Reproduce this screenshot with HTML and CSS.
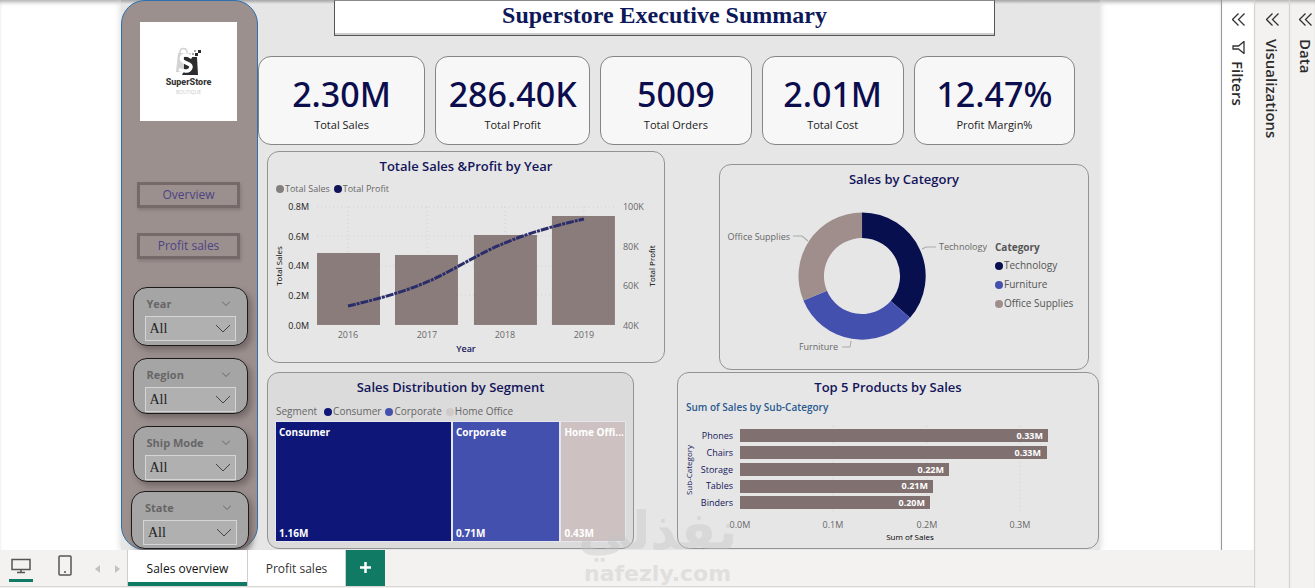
FILE: index.html
```html
<!DOCTYPE html>
<html lang="en">
<head>
<meta charset="utf-8">
<title>Superstore Executive Summary</title>
<link rel="stylesheet" href="styles.css">
</head>
<body>
<div class="app">
  <div class="workspace">
    <div class="stage">
      <div class="canvas">
        <div class="report">
          <aside class="sidebar">
            <div class="logo">
              <svg width="30" height="30" viewBox="0 0 30 30" aria-hidden="true">
                <path d="M4 6H17L15 25H2Z" fill="#d3d3d3"/>
                <path d="M6 8V5Q6 1.500 9.500 1.500T13 5V8" fill="none" stroke="#d3d3d3" stroke-width="1.500"/>
                <path d="M10 10H23L24 28H8L10 24Z" fill="#2c2c2e"/>
                <path d="M18 10.500Q9 5 7.500 11C6.500 17 18 15 17 20.500Q15 26.500 5 22.500" fill="none" stroke="#fff" stroke-width="3.500"/>
                <path d="M21 6h3v3h-3zM24 3h3v3h-3z" fill="#2c2c2e"/>
                <path d="M20 3h2v2h-2zM18 6h2v2h-2z" fill="#aaa"/>
              </svg>
              <span class="logo-name">SuperStore</span>
              <span class="logo-tag">BOUTIQUE</span>
            </div>
            <button class="nav nav-first" type="button">Overview</button>
            <button class="nav" type="button">Profit sales</button>
            <div class="slicers">
              <div class="slicer slicer-tall">
                <div class="slicer-head"><label for="year">Year</label><svg width="8" height="5" viewBox="0 0 8 5"><path d="M0 0.500L4 4.500L8 0.500"/></svg></div>
                <div class="pick"><select id="year"><option>All</option></select><svg width="14" height="9" viewBox="0 0 14 9"><path d="M0 1L7 8L14 1"/></svg></div>
              </div>
              <div class="slicer">
                <div class="slicer-head"><label for="region">Region</label><svg width="8" height="5" viewBox="0 0 8 5"><path d="M0 0.500L4 4.500L8 0.500"/></svg></div>
                <div class="pick"><select id="region"><option>All</option></select><svg width="14" height="9" viewBox="0 0 14 9"><path d="M0 1L7 8L14 1"/></svg></div>
              </div>
              <div class="slicer">
                <div class="slicer-head"><label for="ship">Ship Mode</label><svg width="8" height="5" viewBox="0 0 8 5"><path d="M0 0.500L4 4.500L8 0.500"/></svg></div>
                <div class="pick"><select id="ship"><option>All</option></select><svg width="14" height="9" viewBox="0 0 14 9"><path d="M0 1L7 8L14 1"/></svg></div>
              </div>
              <div class="slicer slicer-wide">
                <div class="slicer-head"><label for="state">State</label><svg width="8" height="5" viewBox="0 0 8 5"><path d="M0 0.500L4 4.500L8 0.500"/></svg></div>
                <div class="pick"><select id="state"><option>All</option></select><svg width="14" height="9" viewBox="0 0 14 9"><path d="M0 1L7 8L14 1"/></svg></div>
              </div>
            </div>
          </aside>

          <main class="board">
            <h1 class="title">Superstore Executive Summary</h1>
            <section class="kpis">
              <div class="kpi kpi-sales"><span class="kpi-value">2.30M</span><span class="kpi-label">Total Sales</span></div>
              <div class="kpi kpi-profit"><span class="kpi-value">286.40K</span><span class="kpi-label">Total Profit</span></div>
              <div class="kpi kpi-orders"><span class="kpi-value">5009</span><span class="kpi-label">Total Orders</span></div>
              <div class="kpi kpi-cost"><span class="kpi-value">2.01M</span><span class="kpi-label">Total Cost</span></div>
              <div class="kpi kpi-margin"><span class="kpi-value">12.47%</span><span class="kpi-label">Profit Margin%</span></div>
            </section>

            <div class="row row-top">
              <section class="card card-year">
                <h2>Totale Sales &amp;Profit by Year</h2>
                <div class="legend"><span class="key grey">Total Sales</span><span class="key navy">Total Profit</span></div>
                <svg class="chart" viewBox="0 0 396 163">
                  <path class="grid" d="M49 9H347M49 38H347M49 68H347M49 97H347M80 9V127M159 9V127M237 9V127M316 9V127"/>
                  <g class="bar-year"><rect x="49" y="55" width="63" height="72"/><rect x="127" y="57" width="63" height="70"/><rect x="206" y="37" width="63" height="90"/><rect x="284" y="18" width="63" height="109"/></g>
                  <path class="trend" d="M80 108C106 102 133 95 159 84C185 73 211 55 237 45C263 34 290 27 316 21"/>
                  <g class="tick dark end"><text x="41" y="12">0.8M</text><text x="41" y="42">0.6M</text><text x="41" y="71">0.4M</text><text x="41" y="101">0.2M</text><text x="41" y="131">0.0M</text></g>
                  <g class="tick"><text x="355" y="12">100K</text><text x="355" y="52">80K</text><text x="355" y="91">60K</text><text x="355" y="131">40K</text></g>
                  <g class="tick mid"><text x="80" y="140">2016</text><text x="159" y="140">2017</text><text x="237" y="140">2018</text><text x="316" y="140">2019</text></g>
                  <text class="axis mid blue" x="198" y="154">Year</text>
                  <text class="axis-side mid" transform="translate(14 68) rotate(-90)">Total Sales</text>
                  <text class="axis-side mid" transform="translate(387 68) rotate(-90)">Total Profit</text>
                </svg>
              </section>

              <section class="card card-category">
                <h2>Sales by Category</h2>
                <div class="split">
                  <svg class="donut" viewBox="0 0 275 174">
                    <path fill="#070f4e" d="M142 19.500A63.500 63.500 0 0 1 190 124.700L170.700 107.900A38 38 0 0 0 142 45Z"/>
                    <path fill="#4450ae" d="M190 124.700A63.500 63.500 0 0 1 83.400 107.500L106.900 97.700A38 38 0 0 0 170.700 107.900Z"/>
                    <path fill="#a08e8d" d="M83.400 107.500A63.500 63.500 0 0 1 142 19.500V45A38 38 0 0 0 106.900 97.700Z"/>
                    <path class="leader" d="M202 56L206 54H216M73 43H82L88 48M122 154H130L131 148"/>
                    <g class="tick"><text x="219" y="57">Technology</text><text class="end" x="70" y="47">Office Supplies</text><text class="end" x="118" y="157">Furniture</text></g>
                  </svg>
                  <div class="side-legend">
                    <strong>Category</strong>
                    <span class="key deep">Technology</span><span class="key blue-key">Furniture</span><span class="key taupe">Office Supplies</span>
                  </div>
                </div>
              </section>
            </div>

            <div class="row row-bottom">
              <section class="card card-segment">
                <h2>Sales Distribution by Segment</h2>
                <div class="legend segment-legend"><span class="legend-title">Segment</span><span class="key royal">Consumer</span><span class="key blue-key">Corporate</span><span class="key pale">Home Office</span></div>
                <div class="treemap">
                  <div class="tile tile-consumer"><span>Consumer</span><span>1.16M</span></div>
                  <div class="tile tile-corporate"><span>Corporate</span><span>0.71M</span></div>
                  <div class="tile tile-home"><span>Home Offi...</span><span>0.43M</span></div>
                </div>
              </section>

              <section class="card card-products">
                <h2>Top 5 Products by Sales</h2>
                <h3>Sum of Sales by Sub-Category</h3>
                <svg class="chart" viewBox="0 -3 420 134">
                  <path class="grid" d="M155 10V96M249 10V96M342 10V96"/>
                  <g class="bar-product"><rect x="62" y="13" width="308" height="13"/><rect x="62" y="30" width="307" height="13"/><rect x="62" y="47" width="209" height="13"/><rect x="62" y="64" width="193" height="13"/><rect x="62" y="80" width="190" height="13"/></g>
                  <g class="tick end blue"><text x="55" y="23">Phones</text><text x="55" y="40">Chairs</text><text x="55" y="57">Storage</text><text x="55" y="73">Tables</text><text x="55" y="90">Binders</text></g>
                  <g class="amount end"><text x="365" y="23">0.33M</text><text x="363" y="40">0.33M</text><text x="266" y="57">0.22M</text><text x="250" y="73">0.21M</text><text x="247" y="90">0.20M</text></g>
                  <g class="tick mid"><text x="62" y="112">0.0M</text><text x="155" y="112">0.1M</text><text x="249" y="112">0.2M</text><text x="342" y="112">0.3M</text></g>
                  <text class="axis-side mid" x="232" y="124">Sum of Sales</text>
                  <text class="axis-side mid blue" transform="translate(14 54) rotate(-90)">Sub-Category</text>
                </svg>
              </section>
            </div>
          </main>
        </div>
      </div>
      <footer class="pages">
        <button class="view view-on" type="button" aria-label="Desktop layout"><svg width="20" height="16" viewBox="0 0 20 16"><path d="M1 1.500H19V11.500H1ZM10 12V14M6 14.500H14" fill="none" stroke="#555" stroke-width="1.500"/></svg></button>
        <button class="view" type="button" aria-label="Phone layout"><svg width="14" height="22" viewBox="0 0 14 22"><rect x="1" y="1" width="12" height="19" rx="1" fill="none" stroke="#555" stroke-width="1.500"/><circle cx="7" cy="17" r="1" fill="#555"/></svg></button>
        <button class="step" type="button" aria-label="Previous page"><svg width="5" height="8" viewBox="0 0 5 8"><path d="M5 0V8L0 4Z" fill="#c4c2c0"/></svg></button>
        <button class="step" type="button" aria-label="Next page"><svg width="5" height="8" viewBox="0 0 5 8"><path d="M0 0V8L5 4Z" fill="#c4c2c0"/></svg></button>
        <button class="tab tab-on" type="button">Sales overview</button>
        <button class="tab tab-second" type="button">Profit sales</button>
        <button class="add" type="button" aria-label="New page"><svg width="11" height="11" viewBox="0 0 11 11"><path d="M5.500 0V11M0 5.500H11" stroke="#fff" stroke-width="2.500"/></svg></button>
      </footer>
      <div class="filters pane">
        <svg width="13" height="13" viewBox="0 0 13 13"><path d="M6.500 0.500L0.500 6.500L6.500 12.500M12.500 0.500L6.500 6.500L12.500 12.500"/></svg>
        <svg class="funnel" width="13" height="13" viewBox="0 0 13 13"><path d="M12 0.500V12.500L6.500 8H1V5H6.500Z"/></svg>
        <span>Filters</span>
      </div>
    </div>
    <div class="pane">
      <svg width="13" height="13" viewBox="0 0 13 13"><path d="M6.500 0.500L0.500 6.500L6.500 12.500M12.500 0.500L6.500 6.500L12.500 12.500"/></svg>
      <span>Visualizations</span>
    </div>
    <div class="pane pane-last">
      <svg width="13" height="13" viewBox="0 0 13 13"><path d="M6.500 0.500L0.500 6.500L6.500 12.500M12.500 0.500L6.500 6.500L12.500 12.500"/></svg>
      <span>Data</span>
    </div>
  </div>
  <div class="watermark" aria-hidden="true"><span class="mark-ar" lang="ar">نفذلي</span><span class="mark-en">nafezly.com</span></div>
</div>
</body>
</html>
```
FILE: styles.css
```css
* { box-sizing: border-box; }
body { margin: 0; font-family: "Open Sans", "Noto Sans", sans-serif; font-size: 10px; color: #222; background: #fff; }
h1, h2, h3 { margin: 0; }
button, select { font-family: inherit; border: 0; padding: 0; background: none; }
.app { position: relative; min-height: 100vh; display: flex; overflow: hidden; }
.workspace { flex: 1; display: flex; min-width: 0; }
.stage { flex: 1; min-width: 0; display: grid; grid-template-columns: 1fr 33px; grid-template-rows: 1fr 39px; }
.canvas { padding: 0 121px; min-width: 0; box-shadow: inset 0 4px 4px -2px #aaa; }
.report { display: flex; height: 100%; background: linear-gradient(#a5a5a5, #e6e6e6 4px); box-shadow: 0 0 7px #d4d4d4; clip-path: inset(0 -12px 0 -12px); }

.sidebar { width: 137px; flex: none; display: flex; flex-direction: column; align-items: center; padding: 21px 2px 0 0; border: 1px solid #2d70ad; border-radius: 24px; background: #9c908f; }
.logo { width: 97px; height: 99px; background: #fff; display: flex; flex-direction: column; align-items: center; padding-top: 25px; }
.logo-name { font-family: Roboto, sans-serif; font-weight: 800; font-size: 9px; line-height: 11px; color: #333; }
.logo-tag { font-size: 5px; line-height: 9px; color: #c9c9c9; }
.nav { width: 103px; height: 26px; margin-top: 25px; border: 3px solid #756a69; color: #4c4382; font-size: 12px; line-height: 20px; box-shadow: 1px 2px 3px #857978; }
.nav-first { margin-top: 61px; }
.slicers { display: flex; flex-direction: column; align-items: center; margin: 28px -3px 0 0; gap: 12px; }
.slicer { width: 115px; height: 56px; border: 1px solid #1d1a1a; border-radius: 14px; padding: 4px 11px 0; background: #a6a5a5; box-shadow: 3px 4px 6px #746968; }
.slicer-tall { height: 59px; }
.slicer-wide { width: 118px; height: 58px; margin-top: -3px; }
.slicer-head { height: 22px; padding: 0 6px 0 2px; display: flex; align-items: center; justify-content: space-between; font-size: 11px; font-weight: 700; color: #666; }
.slicer svg { fill: none; stroke: #444; flex: none; }
.slicer-head svg { stroke: #666; }
.pick { height: 25px; margin-top: 2px; display: grid; grid-template-columns: 1fr 14px; align-items: center; padding-right: 5px; border: 1px solid #d5d5d5; background: #b0b0b0; }
.pick select { grid-area: 1 / 1 / 2 / 3; appearance: none; height: 23px; padding-left: 4px; font-family: "Liberation Serif", serif; font-size: 14px; color: #222; }
.pick svg { grid-area: 1 / 2; pointer-events: none; }

.board { flex: 1; min-width: 0; display: flex; flex-direction: column; }
.title { height: 36px; margin: 0 105px 0 76px; border: 1px solid #555; border-top-color: #888; background: #fff; box-shadow: inset 0 -2px #ccc; text-align: center; font-family: "Liberation Serif", serif; font-size: 24px; line-height: 28px; color: #0d1859; }
.kpis { display: flex; gap: 10px; margin: 20px 25px 0 0; }
.kpi { height: 89px; min-width: 0; display: flex; flex-direction: column; align-items: center; padding-top: 15px; border: 1px solid #858585; border-radius: 13px; background: #f7f7f7; }
.kpi-sales { flex: 167 1 0; }
.kpi-profit { flex: 155 1 0; }
.kpi-orders { flex: 151 1 0; }
.kpi-cost { flex: 142 1 0; }
.kpi-margin { flex: 161 1 0; }
.kpi-value { font-family: "Noto Sans", "Open Sans", sans-serif; font-size: 34px; font-weight: 500; line-height: 45px; color: #0b0d4d; }
.kpi-label { font-size: 11px; line-height: 16px; }

.row { display: flex; }
.row-top { margin: 6px 11px 0 9px; gap: 54px; align-items: flex-start; }
.row-bottom { margin: 2px 1px 0 9px; gap: 43px; }
.card { min-width: 0; border: 1px solid #939393; border-radius: 12px; }
.card h2 { font-size: 13px; line-height: 28px; font-weight: 600; text-align: center; color: #14155a; white-space: nowrap; }
.card-year { flex: 398 1 0; height: 212px; }
.card-category { flex: 370 1 0; height: 206px; margin-top: 13px; }
.card-segment { flex: 349 1 0; height: 177px; display: flex; flex-direction: column; padding: 0 8px 7px; background: #dbdbdb; }
.card-products { flex: 420 1 0; height: 177px; }
.card-products h3 { padding-left: 8px; font-size: 10px; line-height: 12px; font-weight: 600; color: #2a5a8e; }

.legend { display: flex; gap: 4px; padding-left: 8px; line-height: 18px; font-size: 9px; color: #666; white-space: nowrap; }
.segment-legend { padding: 0; line-height: 21px; font-size: 10px; }
.legend-title { margin-right: 3px; }
.key { display: flex; align-items: center; gap: 1px; }
.key::before { content: ""; width: 8px; height: 8px; border-radius: 50%; background: currentColor; }
.grey::before { background: #858080; }
.navy::before { background: #101558; }
.deep::before { background: #070f4e; }
.royal::before { background: #0e1777; }
.blue-key::before { background: #4450ae; }
.taupe::before { background: #a08e8d; }
.pale::before { background: #cfcaca; }
.chart { display: block; width: 100%; }
.grid { fill: none; stroke: #d2d2d2; stroke-dasharray: 1 3; }
.bar-year { fill: #8a7c7b; }
.bar-product { fill: #807170; }
.trend { fill: none; stroke: #2b2d6b; stroke-width: 3; stroke-dasharray: 8 1 3 1; }
.tick { font-size: 9px; fill: #666; }
.dark { fill: #222; }
.blue { fill: #14155a; }
.mid { text-anchor: middle; }
.end { text-anchor: end; }
.axis { font-size: 9px; font-weight: 600; }
.axis-side { font-size: 8px; font-weight: 500; }
.amount { font-size: 9px; font-weight: 700; fill: #fff; }
.leader { fill: none; stroke: #aaa; }
.split { display: flex; }
.donut { flex: 275 1 0; min-width: 0; }
.side-legend { flex: 93 1 0; padding-top: 46px; display: flex; flex-direction: column; font-size: 10px; line-height: 19px; color: #555; white-space: nowrap; }
.side-legend strong { line-height: 17px; }

.treemap { flex: 1; display: flex; gap: 2px; }
.tile { min-width: 0; display: flex; flex-direction: column; justify-content: space-between; padding: 3px 0 0 3px; color: #fff; font-size: 10px; line-height: 15px; font-weight: 700; box-shadow: 0 0 0 1px #e5e5f0; }
.tile span { white-space: nowrap; }
.tile-consumer { flex: 176 1 0; background: #0e1777; }
.tile-corporate { flex: 106 1 0; background: #4450ae; }
.tile-home { flex: 62 1 0; background: #cdc2c1; }

.pane { width: 35px; flex: none; display: flex; flex-direction: column; align-items: center; padding-top: 13px; border-left: 1px solid #d6d4d2; background: #f3f2f1; box-shadow: inset 0 4px 4px -3px #999; }
.pane svg { fill: none; stroke: #333; stroke-width: 1.3; flex: none; }
.pane span { writing-mode: vertical-rl; margin-top: 13px; font-size: 15px; line-height: 20px; font-weight: 600; color: #2b2b2b; }
.filters { grid-area: 1 / 2; width: auto; background: #fff; border-left-color: #999; }
.filters .funnel { margin-top: 15px; }
.filters span { margin-top: 7px; }
.pane-last { width: 26px; padding-left: 6px; }

.pages { grid-column: 1 / 3; grid-row: 2; display: flex; align-items: stretch; padding-bottom: 3px; background: linear-gradient(#f3f2f1 36px, #d9d7d5 36px, #d9d7d5 37px, #f3f2f1 37px); }
.view { width: 24px; margin: 0 10px; display: flex; justify-content: center; padding-top: 5px; }
.view-on { padding-top: 8px; margin: 0 10px 4px 9px; border-bottom: 3px solid #117a65; }
.step { width: 20px; }
.tab { width: 121px; border: solid #d0cecc; border-width: 0 1px 0 0; background: #fff; font-size: 12px; color: #333; }
.tab-on { border-left-width: 1px; font-weight: 500; color: #111; box-shadow: inset 0 -4px #117a65; }
.tab-second { width: 98px; }
.add { width: 39px; background: #117a65; }

.watermark { position: absolute; left: 44%; bottom: 0; width: 158px; display: flex; flex-direction: column; align-items: center; color: #c4c4c4; opacity: 0.4; font-weight: 700; pointer-events: none; }
.mark-ar { font-family: "DejaVu Sans", sans-serif; font-size: 52px; line-height: 56px; }
.mark-en { font-family: "DejaVu Sans", sans-serif; font-size: 22px; line-height: 30px; }
```
